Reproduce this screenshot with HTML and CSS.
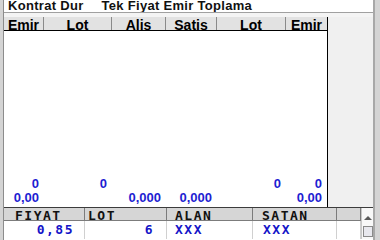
FILE: index.html
```html
<!DOCTYPE html>
<html lang="tr">
<head>
  <meta charset="UTF-8" />
  <title>Emir Defteri</title>
  <link rel="stylesheet" href="styles.css">
</head>
<body>
  <div class="window">
    <div class="topbar">
      <span class="tab">Kontrat Dur</span>
      <span class="tab">Tek Fiyat Emir Toplama</span>
    </div>
    <div class="gap"></div>

    <div class="middle">
      <div class="book">
        <div class="book-row book-head">
          <div class="cell">Emir</div>
          <div class="cell">Lot</div>
          <div class="cell">Alis</div>
          <div class="cell">Satis</div>
          <div class="cell">Lot</div>
          <div class="cell">Emir</div>
        </div>
        <div class="book-body">
          <div class="book-row num-row">
            <div class="cell">0</div>
            <div class="cell">0</div>
            <div class="cell"></div>
            <div class="cell"></div>
            <div class="cell">0</div>
            <div class="cell">0</div>
          </div>
          <div class="book-row num-row">
            <div class="cell">0,00</div>
            <div class="cell"></div>
            <div class="cell">0,000</div>
            <div class="cell">0,000</div>
            <div class="cell"></div>
            <div class="cell">0,00</div>
          </div>
        </div>
      </div>
      <div class="side"></div>
    </div>

    <div class="ticker">
      <div class="t-head c-price">FIYAT</div>
      <div class="t-head c-lot">LOT</div>
      <div class="t-head c-buy">ALAN</div>
      <div class="t-head c-sell">SATAN</div>
      <div class="t-head c-blank"></div>
      <div class="scroll">
        <span class="arrow-up"></span>
        <span class="thumb"></span>
      </div>
      <div class="t-cell c-price">0,85</div>
      <div class="t-cell c-lot">6</div>
      <div class="t-cell c-buy">XXX</div>
      <div class="t-cell c-sell">XXX</div>
      <div class="t-cell c-blank"></div>
    </div>
  </div>
</body>
</html>
```

FILE: styles.css
```css
body, html {
  margin: 0;
  padding: 0;
  height: 100%;
  overflow: hidden;
  background: #d4d4d4;
  font-family: "Liberation Sans", Arial, sans-serif;
}

.window {
  width: 369px;
  height: 240px;
  margin-left: 3px;
  border-left: 1px solid #8c8c8c;
  border-right: 2px solid #a8a8a8;
  background: #f0f0f0;
  display: flex;
  flex-direction: column;
  overflow: hidden;
}

/* top tabs */
.topbar {
  height: 12px;
  background: #fff;
  border-bottom: 1px solid #a0a0a0;
  display: flex;
  gap: 18px;
  padding-left: 4px;
  overflow: hidden;
}

.tab {
  font-size: 13px;
  font-weight: bold;
  line-height: 13px;
  margin-top: -1px;
  letter-spacing: 0.3px;
  color: #111;
}

.gap {
  height: 4px;
  background: #f4f4f4;
}

/* order book */
.middle {
  display: flex;
  height: 190px;
}

.book {
  width: 323px;
  border-right: 1px solid #000;
  display: flex;
  flex-direction: column;
}

.book-row {
  display: grid;
  grid-template-columns: 40px 68px 54px 51px 69px 41px;
}

.book-head {
  height: 13px;
  background: #e2e2e2;
  border-bottom: 1px solid #000;
  overflow: hidden;
}

.book-head .cell {
  font-size: 14px;
  font-weight: bold;
  line-height: 13px;
  padding-top: 2px;
  text-align: center;
  color: #000;
  border-right: 1px solid #8a8a8a;
}

.book-head .cell:last-child {
  border-right: none;
}

.book-body {
  flex: 1;
  background: #fff;
  display: flex;
  flex-direction: column;
  justify-content: flex-end;
  padding-bottom: 2px;
}

.num-row .cell {
  font-size: 13px;
  font-weight: bold;
  line-height: 14px;
  height: 14px;
  text-align: right;
  padding-right: 5px;
  color: #1e1ed2;
}

.side {
  flex: 1;
  background: #f0f0f0;
}

/* last trade strip */
.ticker {
  flex: 1;
  display: grid;
  grid-template-columns: 81px 82px 86px 84px 24px 12px;
  grid-template-rows: 13px 18px;
  border-top: 1px solid #3c3c3c;
  background: #fff;
  font-family: "DejaVu Sans Mono", "Liberation Mono", monospace;
  font-weight: bold;
  font-size: 13px;
}

.t-head {
  line-height: 13px;
  padding-top: 1px;
  overflow: hidden;
  background: #d6d6d6;
  border-right: 1px solid #7c7c7c;
  border-bottom: 1px solid #7c7c7c;
  letter-spacing: 1.5px;
  color: #111;
}

.t-cell {
  line-height: 18px;
  border-right: 1px solid #d0d0d0;
  letter-spacing: 1.5px;
  color: #1414c8;
}

.t-head.c-price { padding-left: 11px; }
.t-head.c-lot { padding-left: 3px; }
.t-head.c-buy { padding-left: 8px; }
.t-head.c-sell { padding-left: 9px; }

.t-cell.c-price { text-align: right; padding-right: 10px; }
.t-cell.c-lot { text-align: right; padding-right: 12px; }
.t-cell.c-buy { padding-left: 8px; }
.t-cell.c-sell { padding-left: 10px; }

.scroll {
  grid-row: span 2;
  grid-column: 6;
  background: #f8f8f8;
  border-left: 1px solid #c8c8c8;
  display: flex;
  flex-direction: column;
  align-items: center;
  padding-top: 8px;
  gap: 6px;
}

.arrow-up {
  width: 0;
  height: 0;
  border-left: 4px solid transparent;
  border-right: 4px solid transparent;
  border-bottom: 4px solid #5a5a5a;
}

.thumb {
  width: 8px;
  height: 9px;
  border: 1px solid #8a8a8a;
  background: #e8e8ee;
}
```
